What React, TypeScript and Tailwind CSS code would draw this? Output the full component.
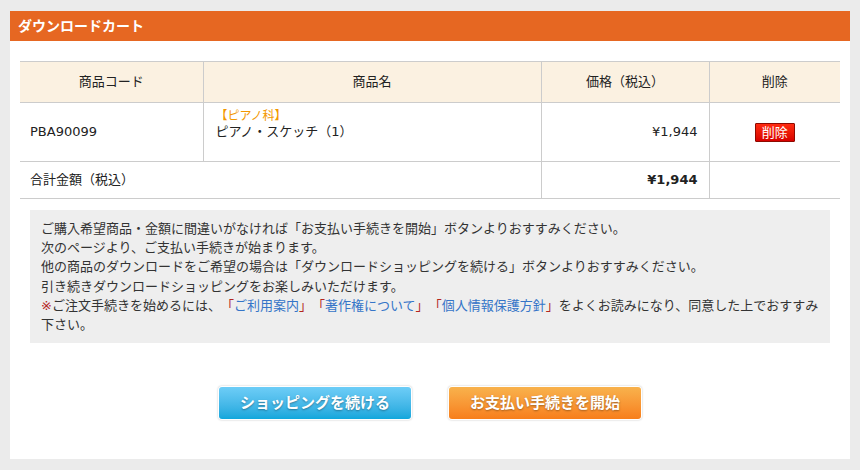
const font = "font-['DejaVu_Sans','Noto_Sans_CJK_JP',sans-serif]";

function Bracketed({ label }: { label: string }) {
  return (
    <>
      <span className="text-[#b3261e]">「</span>
      <a href="#" className="text-[#3575c8]">
        {label}
      </a>
      <span className="text-[#b3261e]">」</span>
    </>
  );
}

export default function App() {
  return (
    <div className={`min-h-[470px] bg-[#ebebeb] px-[10px] pt-[11px] pb-[11px] ${font}`}>
      <div className="flex h-[448px] flex-col bg-white">
        <div className="flex h-[30px] items-center bg-[#e66722] px-[8px] text-[14px] font-bold text-white">
          ダウンロードカート
        </div>

        <div className="px-[10px] pt-[20px]">
          <table className="w-full border-collapse text-[13px] text-[#222]">
            <colgroup>
              <col className="w-[183px]" />
              <col className="w-[338px]" />
              <col className="w-[168px]" />
              <col className="w-[131px]" />
            </colgroup>
            <thead>
              <tr className="h-[41px] border-y border-[#cccccc] bg-[#fbf1e1]">
                <th className="font-normal">商品コード</th>
                <th className="border-l border-[#cccccc] font-normal">商品名</th>
                <th className="border-l border-[#cccccc] font-normal">価格（税込）</th>
                <th className="border-l border-[#cccccc] font-normal">削除</th>
              </tr>
            </thead>
            <tbody>
              <tr className="h-[59px] border-b border-[#cccccc]">
                <td className="pl-[10px] align-middle">PBA90099</td>
                <td className="border-l border-[#cccccc] pl-[12px] pt-[6px] align-top leading-[15px]">
                  <div className="text-[12px] text-[#f39800]">【ピアノ科】</div>
                  <div>ピアノ・スケッチ（1）</div>
                </td>
                <td className="border-l border-[#cccccc] pr-[11px] text-right align-middle">¥1,944</td>
                <td className="border-l border-[#cccccc] align-middle">
                  <div className="flex justify-center">
                    <button className="flex h-[19px] w-[40px] items-center justify-center rounded-[1px] border border-[#8e0a00] bg-gradient-to-b from-[#ff2a10] to-[#d80000] text-[13px] leading-none text-white">
                      削除
                    </button>
                  </div>
                </td>
              </tr>
              <tr className="h-[37px] border-b border-[#cccccc]">
                <td colSpan={2} className="pl-[10px] align-middle">
                  合計金額（税込）
                </td>
                <td className="border-l border-[#cccccc] pr-[11px] text-right align-middle font-bold">
                  ¥1,944
                </td>
                <td className="border-l border-[#cccccc]"></td>
              </tr>
            </tbody>
          </table>
        </div>

        <div className="mx-[20px] mt-[11px] whitespace-nowrap bg-[#eeeeee] pt-[9px] pb-[9px] pl-[11px] text-[13px] leading-[19.2px] text-[#333] [text-spacing-trim:space-all]">
          ご購入希望商品・金額に間違いがなければ「お支払い手続きを開始」ボタンよりおすすみください。
          <br />
          次のページより、ご支払い手続きが始まります。
          <br />
          他の商品のダウンロードをご希望の場合は「ダウンロードショッピングを続ける」ボタンよりおすすみください。
          <br />
          引き続きダウンロードショッピングをお楽しみいただけます。
          <br />
          <span className="text-[#b3261e]">※</span>ご注文手続きを始めるには、
          <Bracketed label="ご利用案内" />
          <Bracketed label="著作権について" />
          <Bracketed label="個人情報保護方針" />
          をよくお読みになり、同意した上でおすすみ
          <br />
          下さい。
        </div>

        <div className="mt-[43px] flex justify-center gap-[36px]">
          <button className="h-[34px] w-[194px] rounded-[4px] bg-white p-[1px] shadow-[0_0_2px_rgba(0,0,0,0.25)]">
            <span className="flex h-full w-full items-center justify-center rounded-[3px] bg-gradient-to-b from-[#6dcdf7] to-[#0ea7dc] text-[15px] font-bold text-white [text-shadow:0_1px_2px_rgba(0,0,0,0.35)]">
              ショッピングを続ける
            </span>
          </button>
          <button className="h-[34px] w-[194px] rounded-[4px] bg-white p-[1px] shadow-[0_0_2px_rgba(0,0,0,0.25)]">
            <span className="flex h-full w-full items-center justify-center rounded-[3px] bg-gradient-to-b from-[#f8b24c] to-[#f77e1a] text-[15px] font-bold text-white [text-shadow:0_1px_2px_rgba(0,0,0,0.35)]">
              お支払い手続きを開始
            </span>
          </button>
        </div>
      </div>
    </div>
  );
}
